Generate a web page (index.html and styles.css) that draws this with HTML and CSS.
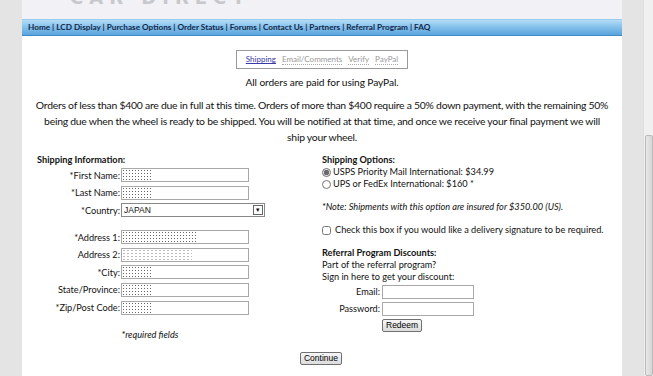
FILE: index.html
```html
<!DOCTYPE html>
<html lang="en">
<head>
  <meta charset="UTF-8">
  <title>Order - Shipping</title>
  <link rel="stylesheet" href="styles.css">
</head>
<body>

<div class="page">
  <div class="header">
    <span class="logo">CAR DIRECT</span>
  </div>
  <div class="nav">
    <a href="#">Home</a> | <a href="#">LCD Display</a> | <a href="#">Purchase Options</a> | <a href="#">Order Status</a> | <a href="#">Forums</a> | <a href="#">Contact Us</a> | <a href="#">Partners</a> | <a href="#">Referral Program</a> | <a href="#">FAQ</a>
  </div>

  <div class="content">
    <div class="steps">
      <a href="#" class="active">Shipping</a>
      <span>Email/Comments</span>
      <span>Verify</span>
      <span>PayPal</span>
    </div>

    <p class="intro">All orders are paid for using PayPal.</p>
    <p class="terms">Orders of less than $400 are due in full at this time. Orders of more than $400 require a 50% down payment, with the remaining 50% being due when the wheel is ready to be shipped. You will be notified at that time, and once we receive your final payment we will <span class="nowrap">ship your wheel.</span></p>

    <div class="columns">
      <div class="col-left">
        <div class="heading">Shipping Information:</div>
        <div class="fields">
          <label for="fname">*First Name:</label><input type="text" id="fname" class="noise">
          <label for="lname">*Last Name:</label><input type="text" id="lname" class="noise">
          <label for="country">*Country:</label>
          <div class="select"><span>JAPAN</span><span class="arrow">&#9662;</span></div>
        </div>
        <div class="fields address">
          <label for="addr1">*Address 1:</label><input type="text" id="addr1" class="noise wide">
          <label for="addr2">Address 2:</label><input type="text" id="addr2" class="noise light">
          <label for="city">*City:</label><input type="text" id="city" class="noise">
          <label for="state">State/Province:</label><input type="text" id="state" class="noise">
          <label for="zip">*Zip/Post Code:</label><input type="text" id="zip" class="noise">
        </div>
        <div class="required">*required fields</div>
      </div>

      <div class="col-right">
        <div class="heading">Shipping Options:</div>
        <label class="option"><input type="radio" name="ship" checked> USPS Priority Mail International: $34.99</label>
        <label class="option"><input type="radio" name="ship"> UPS or FedEx International: $160 *</label>
        <p class="note">*Note: Shipments with this option are insured for $350.00 (US).</p>
        <label class="option check"><input type="checkbox"> Check this box if you would like a delivery signature to be required.</label>

        <div class="heading referral">Referral Program Discounts:</div>
        <div>Part of the referral program?</div>
        <div>Sign in here to get your discount:</div>
        <div class="login">
          <label for="email">Email:</label><input type="text" id="email">
          <label for="pass">Password:</label><input type="password" id="pass">
          <span></span><button class="btn">Redeem</button>
        </div>
      </div>
    </div>

    <div class="submit"><button class="btn">Continue</button></div>
  </div>
</div>

<div class="scrollbar"><div class="thumb"></div></div>

</body>
</html>
```

FILE: styles.css
```css
body {
  margin: 0;
  background-color: #e4e4e4;
  font-family: Lato, "Open Sans", sans-serif;
  font-size: 11px;
  color: #111;
  overflow: hidden;
}
.page {
  width: 600px;
  margin-left: 22px;
  background-color: #fff;
  height: 376px;
  overflow: hidden;
}
.header {
  height: 19px;
  background-color: #f1f1f6;
  overflow: hidden;
}
.logo {
  display: block;
  margin: -13px 0 0 48px;
  font-family: "DejaVu Sans", sans-serif;
  font-size: 18px;
  font-weight: bold;
  letter-spacing: 6px;
  color: #c8c8cc;
}
.nav {
  height: 15px;
  line-height: 14px;
  padding-left: 6px;
  background: linear-gradient(#b4dcf6, #86c2ec 45%, #5aa4dc);
  border-top: 1px solid #9acbee;
  border-bottom: 1px solid #3f8cc8;
  font-size: 8.2px;
  font-weight: bold;
  color: #14284a;
  white-space: nowrap;
}
.nav a {
  color: #14284a;
  text-decoration: none;
}
.content {
  padding-top: 14px;
}
.steps {
  width: 170px;
  height: 17px;
  margin: 0 auto;
  border: 1px solid #9a9a9a;
  font-size: 8px;
  line-height: 16px;
  display: flex;
  justify-content: center;
  gap: 6px;
  color: #999;
}
.steps span {
  border-bottom: 1px dotted #aaa;
  line-height: 10px;
  height: 10px;
  margin-top: 3px;
}
.steps .active {
  color: #3a3aa8;
  text-decoration: underline;
}
.intro {
  text-align: center;
  font-size: 10.2px;
  letter-spacing: -0.1px;
  margin: 5px 0 0;
  line-height: 17px;
}
.terms {
  text-align: center;
  font-size: 10.4px;
  letter-spacing: -0.25px;
  line-height: 16px;
  margin: 6px 10px 0;
}
.nowrap {
  white-space: nowrap;
}
.columns {
  display: flex;
  margin-top: 9px;
}
.col-left {
  width: 300px;
}
.col-right {
  line-height: 12px;
  font-size: 9.2px;
}
.heading {
  font-weight: bold;
  font-size: 9.2px;
  line-height: 12px;
}
.col-left .heading {
  padding-left: 15px;
  margin-bottom: 2px;
}
.fields {
  display: grid;
  grid-template-columns: 98px 128px;
  grid-auto-rows: 14px;
  column-gap: 1px;
  row-gap: 3.6px;
  align-items: center;
  font-size: 9.2px;
}
.fields label,
.login label {
  text-align: right;
}
.address {
  margin-top: 13px;
}
input[type="text"],
input[type="password"] {
  box-sizing: border-box;
  height: 14px;
  padding: 0;
  margin: 0;
  border: 1px solid #a8a8a8;
  background-color: #fff;
}
.noise {
  background:
    linear-gradient(to right, transparent 30px, #fff 30px),
    radial-gradient(circle, #666 0.6px, transparent 1px) 0 0 / 3px 3px;
}
.noise.wide {
  background:
    linear-gradient(to right, transparent 74px, #fff 74px),
    radial-gradient(circle, #666 0.6px, transparent 1px) 0 0 / 3px 3px;
}
.noise.light {
  background:
    linear-gradient(to right, transparent 70px, #fff 70px),
    radial-gradient(circle, #bbb 0.6px, transparent 1px) 0 0 / 4px 3px;
}
.select {
  display: flex;
  justify-content: space-between;
  align-items: center;
  width: 140px;
  height: 12px;
  border: 1px solid #888;
  font-family: "Liberation Sans", sans-serif;
  font-size: 8.5px;
  padding-left: 2px;
  box-sizing: content-box;
}
.select .arrow {
  width: 8px;
  height: 8px;
  border: 1px solid #666;
  margin-right: 1px;
  font-size: 7px;
  line-height: 8px;
  text-align: center;
}
.required {
  text-align: center;
  font-style: italic;
  font-size: 9.2px;
  margin-top: 14px;
  padding-right: 44px;
}
.option {
  display: flex;
  align-items: center;
  gap: 2px;
}
.option input {
  margin: 0;
  width: 9px;
  height: 9px;
  accent-color: #6a6a6a;
}
.note {
  font-style: italic;
  margin: 11px 0 11px;
}
.option.check {
  gap: 4px;
}
.referral {
  margin-top: 11px;
}
.login {
  display: grid;
  grid-template-columns: 58px 92px;
  column-gap: 2px;
  row-gap: 3px;
  align-items: center;
  margin-top: 2px;
}
.login input {
  height: 14px;
}
.btn {
  justify-self: start;
  font-family: "Liberation Sans", sans-serif;
  font-size: 8.5px;
  padding: 0 3px;
  height: 13px;
  line-height: 11px;
  border: 1px solid #707070;
  border-radius: 2px;
  background: linear-gradient(#f6f6f6, #dcdcdc);
  color: #000;
}
.submit {
  text-align: center;
  margin-top: 10px;
  padding-right: 2px;
}
.scrollbar {
  position: fixed;
  top: 0;
  right: 0;
  width: 9px;
  height: 376px;
  background-color: #f0f0f0;
  border-left: 1px solid #e0e0e0;
}
.thumb {
  position: absolute;
  top: 135px;
  left: 1px;
  right: 0;
  bottom: 0;
  background: linear-gradient(to right, #e8e8e8, #d6d6d6);
  border: 1px solid #bbb;
  border-radius: 2px;
}
```
